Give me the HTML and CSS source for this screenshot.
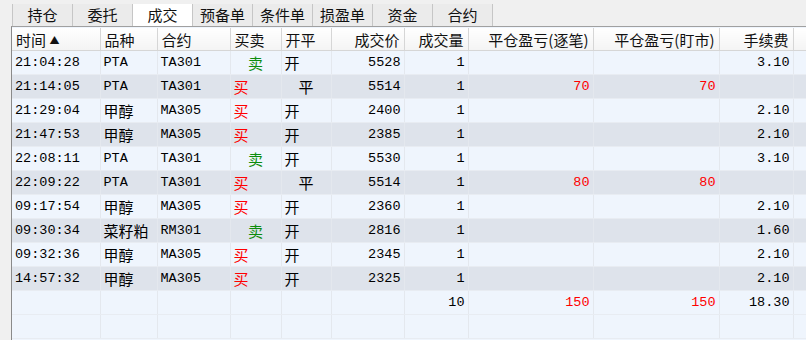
FILE: index.html
```
<!DOCTYPE html>
<html lang="zh-CN">
<head>
    <meta charset="utf-8">
    <title>成交</title>
    <link rel="stylesheet" href="styles.css">
</head>
<body>
    <div class="tabs">
        <div class="tab">持仓</div>
        <div class="tab">委托</div>
        <div class="tab active">成交</div>
        <div class="tab">预备单</div>
        <div class="tab">条件单</div>
        <div class="tab">损盈单</div>
        <div class="tab">资金</div>
        <div class="tab">合约</div>
    </div>
    <div class="panel">
        <table class="grid">
            <colgroup>
                <col style="width:88px"><col style="width:57px"><col style="width:73px">
                <col style="width:51px"><col style="width:50px"><col style="width:73px">
                <col style="width:64px"><col style="width:125px"><col style="width:126px">
                <col style="width:74px"><col>
            </colgroup>
            <thead>
                <tr>
                    <th class="l">时间 <span class="sort">▲</span></th>
                    <th class="l">品种</th>
                    <th class="l">合约</th>
                    <th class="l">买卖</th>
                    <th class="l">开平</th>
                    <th class="r">成交价</th>
                    <th class="r">成交量</th>
                    <th class="r">平仓盈亏(逐笔)</th>
                    <th class="r">平仓盈亏(盯市)</th>
                    <th class="r">手续费</th>
                    <th></th>
                </tr>
            </thead>
            <tbody>
                <tr><td>21:04:28</td><td>PTA</td><td>TA301</td><td class="cn sell">卖</td><td class="cn">开</td><td class="r">5528</td><td class="r">1</td><td></td><td></td><td class="r">3.10</td><td></td></tr>
                <tr><td>21:14:05</td><td>PTA</td><td>TA301</td><td class="cn buy">买</td><td class="cn mid">平</td><td class="r">5514</td><td class="r">1</td><td class="r red">70</td><td class="r red">70</td><td></td><td></td></tr>
                <tr><td>21:29:04</td><td class="cn">甲醇</td><td>MA305</td><td class="cn buy">买</td><td class="cn">开</td><td class="r">2400</td><td class="r">1</td><td></td><td></td><td class="r">2.10</td><td></td></tr>
                <tr><td>21:47:53</td><td class="cn">甲醇</td><td>MA305</td><td class="cn buy">买</td><td class="cn">开</td><td class="r">2385</td><td class="r">1</td><td></td><td></td><td class="r">2.10</td><td></td></tr>
                <tr><td>22:08:11</td><td>PTA</td><td>TA301</td><td class="cn sell">卖</td><td class="cn">开</td><td class="r">5530</td><td class="r">1</td><td></td><td></td><td class="r">3.10</td><td></td></tr>
                <tr><td>22:09:22</td><td>PTA</td><td>TA301</td><td class="cn buy">买</td><td class="cn mid">平</td><td class="r">5514</td><td class="r">1</td><td class="r red">80</td><td class="r red">80</td><td></td><td></td></tr>
                <tr><td>09:17:54</td><td class="cn">甲醇</td><td>MA305</td><td class="cn buy">买</td><td class="cn">开</td><td class="r">2360</td><td class="r">1</td><td></td><td></td><td class="r">2.10</td><td></td></tr>
                <tr><td>09:30:34</td><td class="cn">菜籽粕</td><td>RM301</td><td class="cn sell">卖</td><td class="cn">开</td><td class="r">2816</td><td class="r">1</td><td></td><td></td><td class="r">1.60</td><td></td></tr>
                <tr><td>09:32:36</td><td class="cn">甲醇</td><td>MA305</td><td class="cn buy">买</td><td class="cn">开</td><td class="r">2345</td><td class="r">1</td><td></td><td></td><td class="r">2.10</td><td></td></tr>
                <tr><td>14:57:32</td><td class="cn">甲醇</td><td>MA305</td><td class="cn buy">买</td><td class="cn">开</td><td class="r">2325</td><td class="r">1</td><td></td><td></td><td class="r">2.10</td><td></td></tr>
                <tr class="total"><td></td><td></td><td></td><td></td><td></td><td></td><td class="r">10</td><td class="r red">150</td><td class="r red">150</td><td class="r">18.30</td><td></td></tr>
                <tr class="blank"><td></td><td></td><td></td><td></td><td></td><td></td><td></td><td></td><td></td><td></td><td></td></tr>
            </tbody>
        </table>
    </div>
</body>
</html>
```
FILE: styles.css
```
body {
    margin: 0;
    background: #f0f0f0;
    font-family: "Noto Sans CJK SC", sans-serif;
    overflow: hidden;
}
.tabs {
    display: flex;
    padding: 4px 0 0 12px;
    height: 22px;
}
.tab {
    width: 59px;
    height: 22px;
    line-height: 22px;
    text-align: center;
    font-size: 15px;
    color: #111;
    background: #ebebeb;
    border-left: 1px solid #c6c6c6;
}
.tab:last-child {
    border-right: 1px solid #c6c6c6;
}
.tab.active {
    background: #ffffff;
}
.panel {
    margin-left: 11px;
    border-top: 1px solid #a0a0a0;
    border-left: 1px solid #8a8a8a;
    padding-top: 1px;
    background: #eff5fd;
    height: 320px;
}
.grid {
    border-collapse: collapse;
    table-layout: fixed;
    width: 795px;
}
.grid th {
    height: 22px;
    padding: 0 4px;
    font-weight: normal;
    font-size: 15px;
    color: #111;
    background: linear-gradient(#ffffff, #f4f4f4);
    border-right: 1px solid #d6d6d6;
    border-bottom: 1px solid #d6d6d6;
    white-space: nowrap;
    overflow: hidden;
}
.grid th.l { text-align: left; }
.grid th.r { text-align: right; }
.sort {
    font-size: 10px;
    vertical-align: 2px;
}
.grid td {
    height: 23px;
    padding: 0 3px;
    font-family: "Liberation Mono", "Noto Sans CJK SC", monospace;
    font-size: 13.5px;
    color: #000;
    border-right: 1px solid #e4e8ee;
    border-bottom: 1px solid #e8ecf2;
    white-space: nowrap;
    overflow: hidden;
}
.grid tbody tr:nth-child(odd) td { background: #eff5fd; }
.grid tbody tr:nth-child(even) td { background: #dee3eb; }
.grid tbody tr.blank td { background: #eff5fd; }
.grid td.cn {
    font-family: "Noto Sans CJK SC", sans-serif;
    font-size: 15px;
}
.grid td.r { text-align: right; }
.grid td.sell {
    color: #0c8c0c;
    text-align: center;
}
.grid td.buy { color: #ff0000; }
.grid td.mid { padding-left: 17px; }
.grid td.red { color: #ff0000; }
```
